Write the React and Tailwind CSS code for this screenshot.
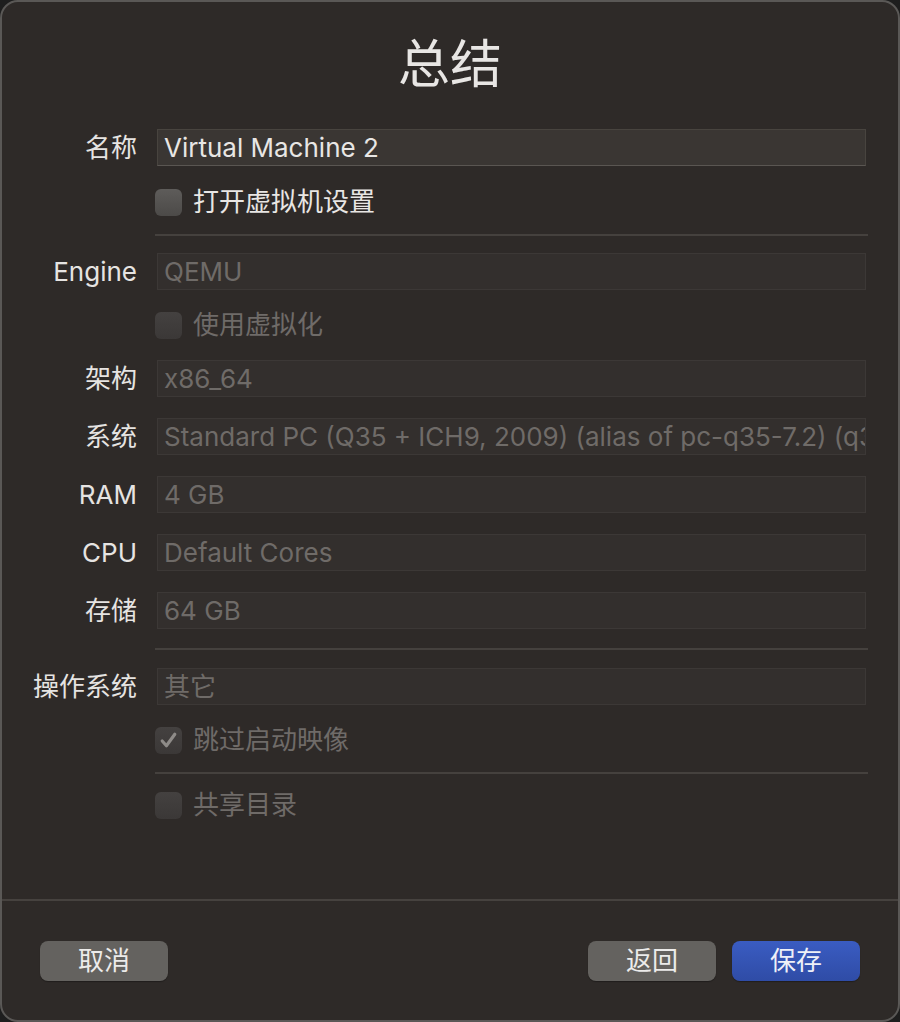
import React from "react";

const font = { fontFamily: 'Inter, "Noto Sans CJK SC", sans-serif' };

function Field({ label, value, enabled, className = "" }) {
  return (
    <div className={`flex items-center h-[37px] ${className}`}>
      <div className="w-[135px] text-right text-[26px] leading-[32px] text-[#e6e4e2]">{label}</div>
      <div
        className={`ml-[20px] w-[709px] h-[37px] flex items-center px-[6px] text-[26px] leading-[32px] whitespace-nowrap overflow-hidden border ${
          enabled
            ? "bg-[#3a3633] border-[#48443f] border-b-[#5a5652] text-[#e8e6e4]"
            : "bg-[#332f2d] border-[#3c3836] text-[#6f6b68]"
        }`}
      >
        {value}
      </div>
    </div>
  );
}

function Check({ label, enabled, checked, className = "" }) {
  return (
    <div className={`flex items-center pl-[153px] h-[36px] ${className}`}>
      <div
        className={`w-[27px] h-[27px] rounded-[6px] flex items-center justify-center ${
          enabled
            ? "bg-gradient-to-b from-[#5e5c5a] to-[#4c4a48]"
            : "bg-gradient-to-b from-[#444140] to-[#3b3837]"
        }`}
      >
        {checked && (
          <svg width="21" height="21" viewBox="0 0 20 20">
            <path d="M4 10.5 L8 15 L16 4" fill="none" stroke="#8e8b88" strokeWidth="3" strokeLinecap="round" strokeLinejoin="round" />
          </svg>
        )}
      </div>
      <div className={`ml-[11px] text-[26px] leading-[32px] ${enabled ? "text-[#e8e6e4]" : "text-[#6f6b68]"}`}>{label}</div>
    </div>
  );
}

function Sep({ className = "" }) {
  return <div className={`ml-[153px] w-[713px] h-[2px] bg-[#45413e] ${className}`} />;
}

export default function App() {
  return (
    <div className="w-[900px] h-[1022px] bg-[#1e1e1e]" style={font}>
      <div className="w-full h-full rounded-[18px] border-2 border-[#5a5856] bg-[#2e2a28] flex flex-col overflow-hidden">
        <div className="h-[126px] flex justify-center pt-[30px]">
          <div className="text-[52px] leading-[66px] text-[#e8e6e4]">总结</div>
        </div>
        <Field label="名称" value="Virtual Machine 2" enabled className="mt-[1px]" />
        <Check label="打开虚拟机设置" enabled className="mt-[18px]" />
        <Sep className="mt-[14px]" />
        <Field label="Engine" value="QEMU" className="mt-[17px]" />
        <Check label="使用虚拟化" className="mt-[17px]" />
        <Field label="架构" value="x86_64" className="mt-[17px]" />
        <Field label="系统" value="Standard PC (Q35 + ICH9, 2009) (alias of pc-q35-7.2) (q35)" className="mt-[21px]" />
        <Field label="RAM" value="4 GB" className="mt-[21px]" />
        <Field label="CPU" value="Default Cores" className="mt-[21px]" />
        <Field label="存储" value="64 GB" className="mt-[21px]" />
        <Sep className="mt-[19px]" />
        <Field label="操作系统" value="其它" className="mt-[18px]" />
        <Check label="跳过启动映像" checked className="mt-[17px]" />
        <Sep className="mt-[14px]" />
        <Check label="共享目录" className="mt-[13px]" />
        <div className="mt-[76px] h-[2px] bg-[#46423f]" />
        <div className="flex items-center px-[38px] mt-[40px]">
          <button className="w-[128px] h-[40px] rounded-[8px] bg-[#64625f] text-[26px] leading-[32px] text-[#ecebea] shadow-[0_1px_1px_rgba(0,0,0,0.3)]">取消</button>
          <div className="flex-1" />
          <button className="w-[128px] h-[40px] rounded-[8px] bg-[#64625f] text-[26px] leading-[32px] text-[#ecebea] shadow-[0_1px_1px_rgba(0,0,0,0.3)]">返回</button>
          <button className="ml-[16px] w-[128px] h-[40px] rounded-[8px] bg-gradient-to-b from-[#3a5cc2] to-[#2f4ca6] text-[26px] leading-[32px] text-[#eef0f8] shadow-[0_1px_1px_rgba(0,0,0,0.3)]">保存</button>
        </div>
      </div>
    </div>
  );
}
